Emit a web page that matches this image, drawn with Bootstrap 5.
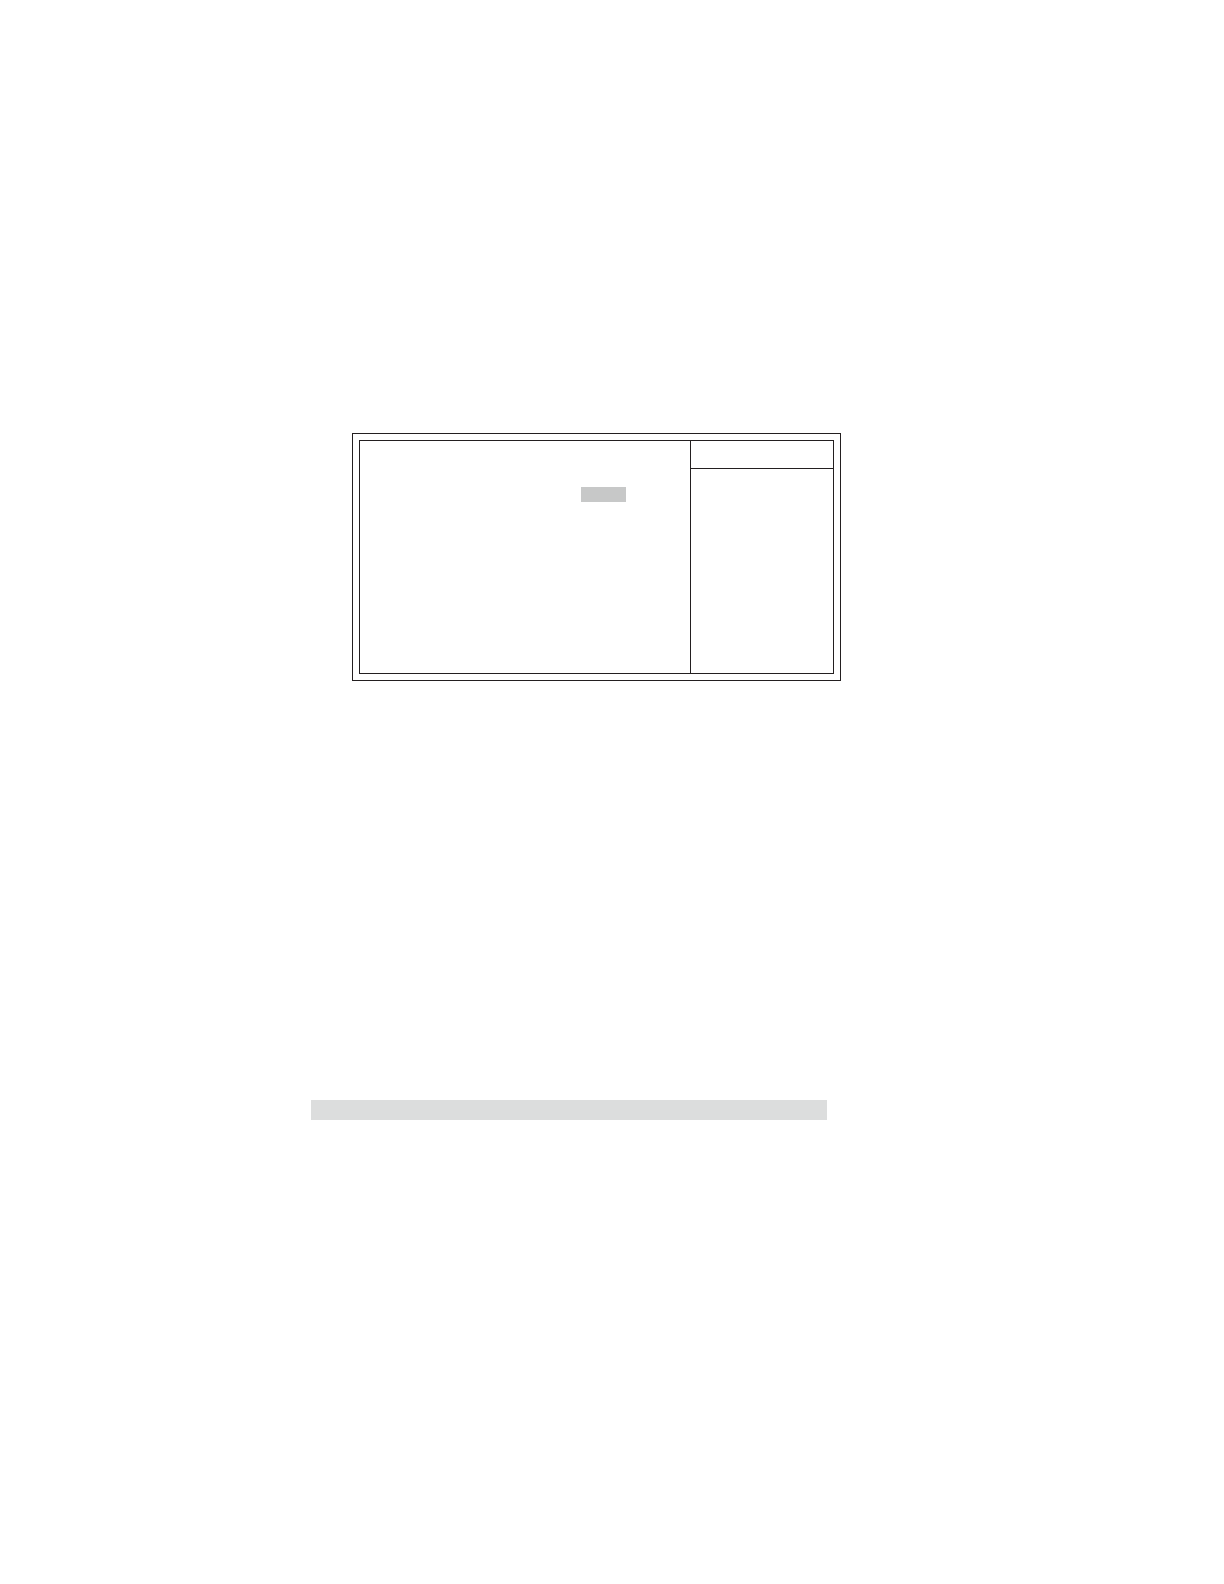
<!DOCTYPE html>
<html lang="en">
<head>
<meta charset="utf-8">
<meta name="viewport" content="width=device-width, initial-scale=1">
<title>Setup screen</title>
<link rel="stylesheet" href="https://cdn.jsdelivr.net/npm/bootstrap@5.3.0/dist/css/bootstrap.min.css">
<style>
  :root { --ink: #231f20; }
  body { font-family: "Liberation Sans", Arial, sans-serif; background: #fff; }
  .sheet { padding: 433px 0 464px 5px; }
  /* double-ruled frame */
  .frame-outer { max-width: 489px; margin-left: 41px; padding: 6px; border: 1px solid var(--ink); }
  .frame-inner { min-height: 234px; border: 1px solid var(--ink); }
  .pane-main { padding: 46px 64px 0 0; }
  .pane-help { flex: 0 0 30.2%; border-left: 1px solid var(--ink); }
  .help-head { height: 28px; border-bottom: 1px solid var(--ink); }
  .selected-value { width: 45px; height: 15px; background: #c7c8c8; }
  .band { max-width: 516px; height: 20px; margin-top: 419px; background: #dcdddd; }
</style>
<script src="https://cdn.jsdelivr.net/npm/bootstrap@5.3.0/dist/js/bootstrap.bundle.min.js"></script>
</head>
<body>
<main class="container-fluid p-0">
  <div class="row g-0">
    <div class="col-9 offset-3 sheet">
      <section class="frame-outer" aria-label="Setup screen">
        <div class="frame-inner d-flex">
          <div class="pane-main flex-grow-1 d-flex justify-content-end align-items-start">
            <div class="selected-value"></div>
          </div>
          <aside class="pane-help">
            <div class="help-head"></div>
          </aside>
        </div>
      </section>
      <div class="band"></div>
    </div>
  </div>
</main>
</body>
</html>
